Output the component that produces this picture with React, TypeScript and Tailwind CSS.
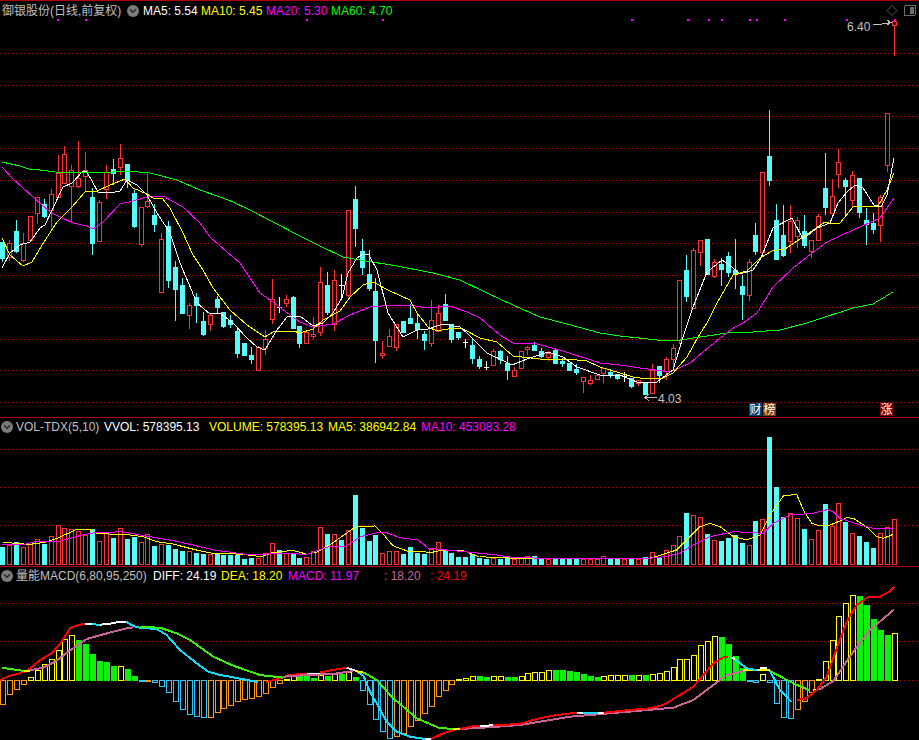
import React from 'react';

// Every series below was read off the picture; v/3 because the numbers come from 3x crops.
type Kind = 'r' | 'c' | 'w';
type Row = [Kind, number, number, number, number];

const STEP = 6.91;
const barX = (i: number) => Math.round(2.3 + STEP * i);

const RED = '#ff3232';
const CYAN = '#54fcfc';
const DOT = '#b80000';

const scale = (oy: number, rows: Row[]) =>
  rows.map(([k, a, b, c, d]) => [k, oy + a / 3, oy + b / 3, oy + c / 3, oy + d / 3] as Row);

const candles: Row[] = [
  ...scale(130, [
    ['c', 336, 384, 336, 396], ['r', 338, 380, 330, 392], ['c', 303, 362, 270, 370], ['r', 340, 390, 310, 395],
    ['r', 259, 330, 259, 330], ['r', 202, 248, 202, 282], ['c', 222, 258, 208, 264], ['r', 193, 240, 178, 293],
    ['r', 130, 200, 75, 200], ['r', 72, 160, 48, 160], ['r', 121, 167, 105, 280], ['r', 145, 167, 33, 173],
    ['r', 120, 137, 67, 185], ['c', 201, 338, 175, 375], ['r', 217, 332, 210, 332], ['r', 125, 176, 105, 207],
    ['c', 117, 129, 87, 165], ['r', 85, 112, 42, 135], ['c', 102, 150, 102, 174], ['c', 189, 288, 180, 293],
    ['r', 232, 341, 232, 351], ['r', 214, 227, 130, 233], ['c', 255, 282, 222, 306], ['r', 328, 485, 310, 485],
    ['c', 288, 450, 273, 473], ['c', 411, 476, 393, 572], ['c', 465, 549, 445, 549], ['r', 526, 556, 520, 596],
    ['c', 501, 525, 490, 578], ['c', 573, 612, 546, 617], ['r', 556, 581, 550, 602], ['c', 507, 531, 498, 550],
    ['c', 546, 588, 546, 594], ['c', 570, 582, 556, 595], ['c', 603, 668, 595, 683], ['c', 639, 675, 639, 678],
    ['c', 675, 687, 652, 702], ['r', 652, 721, 648, 721], ['r', 628, 654, 600, 674], ['r', 508, 566, 447, 581],
    ['w', 532, 532, 501, 548], ['r', 508, 518, 495, 531], ['c', 501, 594, 498, 597], ['c', 588, 639, 588, 654],
  ]),
  ...scale(170, [
    ['r', 487, 518, 487, 518], ['r', 492, 499, 441, 508], ['r', 336, 485, 291, 498], ['c', 345, 427, 306, 435],
    ['r', 331, 462, 300, 483], ['w', 346, 346, 312, 390], ['r', 121, 374, 121, 380], ['c', 87, 174, 48, 230],
    ['c', 243, 291, 207, 315], ['c', 312, 354, 240, 362], ['c', 363, 510, 325, 578], ['r', 550, 556, 513, 567],
    ['r', 499, 528, 477, 532], ['r', 463, 532, 463, 543], ['c', 453, 486, 453, 490], ['c', 444, 459, 402, 462],
    ['c', 459, 478, 430, 508], ['c', 492, 510, 483, 540], ['r', 451, 518, 390, 530], ['r', 430, 484, 405, 484],
    ['c', 402, 450, 372, 452], ['c', 462, 507, 462, 519], ['c', 486, 501, 486, 510], ['w', 516, 516, 506, 534],
    ['c', 525, 564, 507, 582], ['c', 567, 588, 558, 597], ['w', 591, 591, 573, 600], ['r', 544, 585, 537, 588],
    ['c', 543, 568, 540, 582], ['c', 580, 600, 558, 630], ['r', 600, 618, 591, 621], ['r', 544, 593, 544, 593],
    ['r', 531, 537, 528, 555], ['c', 525, 541, 516, 543], ['c', 543, 557, 534, 564], ['r', 549, 561, 543, 573],
    ['c', 540, 579, 534, 582], ['c', 573, 579, 564, 591], ['c', 579, 600, 579, 600], ['c', 597, 606, 582, 615],
    ['r', 621, 632, 621, 669], ['r', 630, 638, 615, 645], ['r', 615, 626, 615, 626],
  ]),
  ...scale(350, [
    ['r', 55, 70, 55, 100], ['c', 66, 72, 57, 84], ['c', 72, 84, 72, 90], ['w', 78, 78, 66, 95],
    ['c', 84, 108, 84, 114], ['r', 90, 99, 90, 108], ['c', 96, 132, 96, 135],
  ]),
  ...scale(200, [
    ['r', 510, 580, 492, 580], ['c', 498, 525, 498, 548], ['r', 477, 513, 471, 540], ['r', 444, 478, 432, 510],
    ['r', 240, 420, 240, 432], ['c', 210, 288, 165, 306], ['r', 150, 324, 144, 324], ['r', 120, 155, 120, 198],
    ['c', 117, 222, 117, 222], ['r', 186, 228, 177, 234], ['c', 192, 207, 174, 258], ['c', 168, 216, 156, 231],
    ['c', 210, 222, 117, 267], ['c', 258, 282, 225, 360], ['r', 186, 285, 177, 303], ['c', 105, 153, 69, 165],
  ]),
  ...scale(140, [
    ['r', 97, 335, 97, 335], ['c', 48, 120, -90, 137], ['c', 240, 357, 192, 360], ['c', 285, 345, 195, 350],
    ['r', 243, 303, 195, 339], ['r', 240, 288, 232, 324], ['c', 273, 315, 225, 324], ['r', 300, 332, 300, 354],
    ['r', 229, 299, 222, 299], ['c', 144, 201, 39, 225], ['r', 168, 219, 117, 219], ['r', 66, 101, 27, 144],
    ['c', 120, 138, 114, 228], ['r', 105, 180, 93, 204], ['c', 114, 216, 114, 234], ['c', 240, 252, 204, 315],
    ['c', 249, 267, 219, 282], ['r', 171, 255, 165, 306], ['r', -81, 75, -81, 96], ['r', -357, -345, -357, -252],
  ]),
];

// Volume bar tops. First stretch from a crop that came out 2.8x wide, y still 3x.
const volTops = [
  396, 390, 381, 396, 388, 373, 386, 363, 330, 340, 343, 348, 360, 342, 378, 352, 369, 340, 372, 366,
  381, 358, 393, 388, 391, 402, 408, 409, 414, 417, 417, 417, 420, 420, 420, 432, 429, 429, 413, 385,
  405, 414, 417, 429, 427, 409, 337, 357, 358, 375, 346, 240, 339, 378, 360, 413, 409, 409, 417, 396,
  414, 417, 402, 382, 406, 414, 426, 426, 417, 429, 432, 429, 431, 424, 433, 428, 424, 424, 429, 433,
  429, 429, 431, 433, 431, 433, 431, 424, 432, 432, 431, 432, 433, 426, 412, 429, 406, 391, 364, 294,
  301, 307, 357, 376, 378, 369, 360, 384, 391, 318, 313, 66, 216, 306, 295, 310, 342, 373, 346, 267,
  333, 265, 321, 355, 363, 381, 399, 355, 337, 313,
].map((v) => 415 + v / 3);

// 'o' orange, 'b' blue, 'y' yellow hollow, 'g' green filled
const macdKinds = [
  'oooo', 'yyyyyyy', 'gggggg', 'y', 'gg', 'b', 'o', 'bbbbbbbb', 'ooooooooooo', 'yy', 'ggg', 'y', 'g', 'y', 'g', 'y', 'g',
  'bbbbb', 'ooooooooo', 'y', 'yy', 'gg', 'yy', 'gg', 'yyyyy', 'ggggggg', 'yyyy', 'g', 'y', 'g', 'yyyyyyyyyy', 'gggg',
  'bb', 'y', 'bbbb', 'ooo', 'yyyyyy', 'ggggg', 'y',
].join('');

const macdEnds = [
  418, 388, 373, 358, 337, 316, 298, 283, 256, 223, 211, 226, 238, 267, 289, 292, 303, 304, 313, 333,
  349, 349, 352, 364, 382, 409, 433, 448, 454, 457, 455, 442, 430, 421, 409, 403, 400, 394, 385, 367,
  355, 342, 334, 333, 333, 340, 331, 333, 328, 328, 322, 336, 376, 418, 463, 499, 518, 514, 505, 484,
  464, 445, 424, 394, 374, 358, 343,
  338, 334, 334, 336, 334, 334, 336, 336, 334, 325, 320, 320, 316, 315, 315, 318, 321, 327, 333, 336,
  334, 331, 331, 331, 330, 331, 330, 328, 325, 319, 307, 283, 283, 271, 241, 229, 214, 216, 237, 273,
  310, 349, 352, 328, 352, 415, 457, 460, 433, 409, 382, 343, 289, 226, 154, 115, 91, 94, 120, 163,
  196, 210, 205,
].map((v) => 565 + v / 3);

const macdColor: Record<string, string> = { o: '#ff9a14', b: '#32c8ff', y: '#ffff00', g: '#0cf00c' };

const pts = (list: number[][], ox = 0, oy = 0, sx = 1 / 3, sy = 1 / 3) =>
  list.map(([x, y]) => `${(ox + x * sx).toFixed(1)},${(oy + y * sy).toFixed(1)}`).join(' ');

const ma60 = [[2,162],[20,166],[29,169],[40,170],[55,172],[100,173],[127,171],[150,173],[177,180],[200,190],[220,197],[233,202],[248,209],[300,236],[320,246],[343,257],[360,260],[397,266],[433,273],[460,280],[487,293],[513,305],[540,317],[567,324],[600,333],[620,336],[657,340],[680,340],[727,333],[753,332],[780,330],[807,323],[853,308],[873,304],[893,292]];
const ma20 = [[2,167],[13,179],[33,197],[50,212],[62,218],[73,223],[87,226],[93,229],[103,222],[120,204],[133,201],[147,197],[163,196],[183,207],[200,223],[210,237],[227,252],[240,263],[260,293],[277,305],[290,315],[300,322],[313,327],[333,324],[350,315],[370,307],[393,305],[410,305],[427,308],[450,306],[467,312],[480,318],[500,335],[513,343],[533,343],[560,350],[600,363],[620,365],[640,368],[670,372],[690,363],[703,352],[720,338],[735,327],[743,323],[757,313],[773,287],[793,268],[807,257],[827,242],[853,230],[880,218],[894,198]];
const ma10 = [[2,238],[10,255],[23,266],[32,262],[42,245],[57,222],[72,207],[85,192],[97,191],[110,185],[125,179],[133,188],[147,194],[153,198],[162,198],[170,208],[183,233],[193,255],[203,270],[213,288],[230,310],[247,325],[265,337],[273,332],[293,331],[300,333],[313,329],[323,320],[340,311],[350,297],[363,285],[373,282],[390,291],[410,300],[417,313],[428,327],[437,331],[453,328],[463,329],[480,338],[497,342],[513,356],[540,359],[560,359],[577,360],[587,361],[600,367],[620,373],[633,377],[647,379],[663,378],[673,373],[687,357],[698,337],[707,323],[717,303],[733,275],[747,271],[760,258],[772,251],[785,249],[803,237],[825,222],[832,224],[840,223],[853,207],[878,206],[887,190],[894,173]];
const ma5 = [[2,268],[10,253],[20,245],[30,242],[40,228],[45,225],[53,208],[63,187],[72,183],[83,171],[87,172],[98,192],[110,193],[120,191],[127,180],[137,185],[147,195],[157,213],[170,233],[180,263],[197,303],[210,314],[220,313],[233,323],[247,338],[257,347],[265,350],[277,330],[287,317],[300,316],[313,326],[323,323],[333,313],[342,298],[348,273],[357,258],[363,254],[369,255],[377,270],[388,313],[403,337],[417,330],[428,329],[443,324],[460,327],[467,333],[487,353],[512,365],[527,359],[548,352],[563,357],[577,367],[600,375],[620,375],[637,382],[657,382],[673,370],[683,337],[693,307],[707,272],[722,260],[732,267],[740,274],[753,270],[761,258],[773,228],[792,218],[803,239],[817,228],[830,223],[838,203],[847,192],[855,185],[863,188],[874,205],[881,207],[887,195],[894,158]];

const markers = [57, 85, 306, 382, 631, 687, 708, 721, 749, 756, 784, 846, 894];

const volYellowA = [[7,381],[50,386],[85,388],[125,382],[160,370],[215,343],[250,343],[270,355],[320,358],[350,358],[400,365],[440,380],[480,386],[550,405],[590,414],[680,418],[730,425],[760,414],[820,406],[860,418],[890,410],[930,385],[990,340],[1010,334],[1050,333],[1075,360],[1100,392],[1140,408],[1210,412],[1240,405],[1300,408],[1340,425]];
const volYellowB = [[0,425],[100,430],[300,432],[500,431],[530,424],[590,405],[620,375],[660,335],[690,325],[720,335],[760,365],[800,375],[840,360],[870,300],[910,243],[950,238],[970,285],[995,325],[1020,333],[1050,330],[1075,320],[1100,308],[1120,310],[1165,340],[1190,365],[1210,370],[1240,358]];
const volMagentaA = [[7,388],[60,390],[100,380],[170,378],[230,360],[260,354],[340,350],[420,365],[500,380],[600,405],[700,420],[780,415],[860,418],[920,395],[970,393],[1010,365],[1060,352],[1080,352],[1120,368],[1170,375],[1200,400],[1300,410],[1344,415]];
const volMagentaB = [[0,415],[50,420],[100,428],[300,431],[500,431],[560,424],[600,415],[640,390],[690,365],[760,350],[800,352],[850,355],[880,325],[930,300],[1000,295],[1040,284],[1060,290],[1080,310],[1140,330],[1180,340],[1240,342]];

const PINK = '#c86496';
const DGREEN = '#3cf00a';
const LCYAN = '#14dcff';
const YEL = '#ffff00';

// [colour, points] coloured stretches of the two thick lines, left crop then right crop
const diffA: [string, number[][]][] = [
  ['#ff0000', [[0,345],[30,332],[60,325],[85,315],[120,285],[155,265],[185,230],[210,190],[225,183],[255,176]]],
  ['#ffffff', [[255,176],[275,178]]],
  [LCYAN, [[275,178],[300,179]]],
  ['#ffffff', [[300,179],[330,176],[360,170],[378,170]]],
  [LCYAN, [[378,170],[400,183],[420,188],[470,192],[500,210],[540,255],[590,295],[625,320],[660,330],[700,337],[730,343],[775,351]]],
  ['#ff0000', [[797,351],[830,343],[870,330],[920,326]]],
  ['#ffffff', [[920,326],[960,326]]],
  ['#ff0000', [[960,322],[1040,308]]],
  ['#ffffff', [[1040,308],[1070,318]]],
  [LCYAN, [[1070,318],[1090,332],[1110,380],[1130,415],[1160,470],[1190,500],[1230,515],[1275,522]]],
  ['#ffffff', [[1275,522],[1293,522]]],
  ['#ff0000', [[1293,522],[1330,505],[1380,490]]],
];
const deaA: [string, number[][]][] = [
  [DGREEN, [[6,308],[72,318]]],
  [YEL, [[72,318],[90,318]]],
  [PINK, [[90,316],[130,308],[165,290],[205,260],[260,222],[310,208],[380,190],[400,187]]],
  [DGREEN, [[420,186],[480,188],[530,205],[570,225],[640,275],[700,302],[780,330],[850,338]]],
  [PINK, [[850,335],[920,330],[1000,327],[1060,318]]],
  [YEL, [[1065,318],[1090,322]]],
  [DGREEN, [[1090,322],[1130,345],[1180,400],[1250,460],[1320,490],[1360,491]]],
  [YEL, [[1360,491],[1380,491]]],
];
const diffB: [string, number[][]][] = [
  ['#ff0000', [[0,492],[40,484],[60,483]]],
  ['#ffffff', [[60,483],[100,481]]],
  ['#ff0000', [[100,481],[180,477],[230,462],[290,450],[350,443]]],
  ['#ffffff', [[350,443],[370,443]]],
  [LCYAN, [[370,443],[413,443]]],
  ['#ffffff', [[413,443],[432,443]]],
  ['#ff0000', [[432,443],[500,436],[570,430],[610,420],[660,390],[700,365],[760,295],[790,277],[805,275]]],
  ['#ffffff', [[812,278],[825,281]]],
  [LCYAN, [[825,283],[860,310],[890,316]]],
  [LCYAN, [[930,318],[960,375],[995,412]]],
  ['#ff0000', [[1012,405],[1040,400],[1070,375],[1100,335],[1130,250],[1160,170],[1190,120],[1225,96],[1260,95],[1285,82],[1303,65]]],
];
const deaB: [string, number[][]][] = [
  [PINK, [[0,492],[100,486],[180,480],[330,455],[530,438],[640,428],[700,405],[760,360],[800,330],[850,318]]],
  [YEL, [[848,315],[930,315]]],
  ['#ffffff', [[900,310],[920,310]]],
  [DGREEN, [[930,318],[1000,355],[1050,376]]],
  [YEL, [[1060,375],[1075,375]]],
  [PINK, [[1075,375],[1120,348],[1180,260],[1230,195],[1303,133]]],
];

const DottedLine = ({ y, x2 = 919 }: { y: number; x2?: number }) => (
  <line x1={0} x2={x2} y1={y + 0.5} y2={y + 0.5} stroke={DOT} strokeDasharray="1 3" />
);

const Candle = ({ row, i }: { row: Row; i: number }) => {
  const x = barX(i);
  const [kind, a, b, c, d] = row;
  const top = Math.round(a);
  const bot = Math.round(b);
  const hi = Math.round(c);
  const lo = Math.round(d);
  const colour = kind === 'r' ? RED : kind === 'c' ? CYAN : '#ffffff';
  if (kind === 'w') {
    return (
      <g stroke={colour}>
        <line x1={x + 0.5} x2={x + 0.5} y1={hi} y2={lo} />
        <line x1={x - 2} x2={x + 3} y1={top + 0.5} y2={top + 0.5} />
      </g>
    );
  }
  return (
    <g stroke={colour}>
      <line x1={x + 0.5} x2={x + 0.5} y1={hi} y2={top} />
      <line x1={x + 0.5} x2={x + 0.5} y1={bot} y2={lo} />
      <rect x={x - 1.5} y={top + 0.5} width={4} height={Math.max(bot - top, 1)} fill={kind === 'c' ? colour : '#000000'} />
    </g>
  );
};

const Chevron = () => (
  <span className="flex h-[12px] w-[12px] shrink-0 items-center justify-center rounded-full bg-[#7c7c7c]">
    <svg width="8" height="6" viewBox="0 0 8 6" fill="none" stroke="#262626" strokeWidth="1.4">
      <path d="M1 1.2 L4 4.2 L7 1.2" />
    </svg>
  </span>
);

const textFont = "font-['Liberation_Sans','Noto_Sans_CJK_SC',sans-serif] text-[12px] leading-[14px] whitespace-nowrap";

export default function App() {
  return (
    <div className={`flex h-[740px] w-[919px] flex-col overflow-hidden bg-black ${textFont}`}>
      {/* Price pane */}
      <div className="relative border-t border-[#b00000]">
        <svg className="block" width={919} height={416} viewBox="0 1 919 416" shapeRendering="crispEdges" fill="none">
          {[53, 85, 116, 148, 180, 212, 243, 275, 307, 339, 370, 402].map((y) => (
            <DottedLine key={y} y={y} />
          ))}
          {candles.map((row, i) => (
            <Candle key={i} row={row} i={i} />
          ))}
          <polyline points={pts(ma60, 0, 0, 1, 1)} stroke="#00ff00" />
          <polyline points={pts(ma20, 0, 0, 1, 1)} stroke="#ff00ff" />
          <polyline points={pts(ma10, 0, 0, 1, 1)} stroke="#ffff00" />
          <polyline points={pts(ma5, 0, 0, 1, 1)} stroke="#ffffff" />
          {markers.map((x) => (
            <rect key={x} x={x} y={19} width={2} height={2} fill="#ff00ff" />
          ))}
          <path d="M873.5 25 L882 24 L891 22.5 M887 20 L891 22.5 L887 25" stroke="#c0c0c0" />
          <path d="M645 397.5 H657 M649 394 L645 397.5 L649 401" stroke="#c0c0c0" />
          <path d="M892 5.5 L897 10.5 L892 15.5 L887 10.5 Z" stroke="#5c5c5c" shapeRendering="auto" />
          <rect x={904.5} y={5.5} width={11} height={10} rx={1.5} stroke="#6e6e6e" strokeWidth={1} />
          <rect x={910} y={7} width={4} height={7} fill="#6e6e6e" />
        </svg>

        <div className="absolute left-[2px] top-[3px] flex items-center">
          <span className="w-[125px] text-[#c0c0c0]">御银股份(日线,前复权)</span>
          <Chevron />
          <span className="ml-[4px] w-[58px] text-[#ffffff]">MA5: 5.54</span>
          <span className="w-[65px] text-[#ffff00]">MA10: 5.45</span>
          <span className="w-[65px] text-[#ff00ff]">MA20: 5.30</span>
          <span className="text-[#00ff00]">MA60: 4.70</span>
        </div>

        <span className="absolute left-[847px] top-[19px] text-[#c0c0c0]">6.40</span>
        <span className="absolute left-[658px] top-[391px] text-[#c0c0c0]">4.03</span>
        <span className="absolute left-[749px] top-[402px] flex h-[13px] w-[13px] items-center justify-center bg-[#0a3a6e] text-white">财</span>
        <span className="absolute left-[763px] top-[402px] flex h-[13px] w-[13px] items-center justify-center bg-[#7a3c0a] text-white">榜</span>
        <span className="absolute left-[880px] top-[402px] flex h-[13px] w-[13px] items-center justify-center bg-[#800000] text-white">涨</span>
      </div>

      {/* Volume pane */}
      <div className="relative border-t border-[#b00000]">
        <svg className="block" width={919} height={148} viewBox="0 418 919 148" shapeRendering="crispEdges" fill="none">
          {[449, 487, 525].map((y) => (
            <DottedLine key={y} y={y} />
          ))}
          {volTops.map((t, i) => {
            const x = barX(i);
            const top = Math.round(t);
            const hollow = candles[i][0] === 'r' || i === 90;
            return hollow ? (
              <rect key={i} x={x - 1.5} y={top + 0.5} width={4} height={564 - top} stroke={RED} />
            ) : (
              <rect key={i} x={x - 2} y={top} width={5} height={565 - top} fill={CYAN} />
            );
          })}
          <polyline points={pts(volYellowA, 0, 415, 1 / 2.8)} stroke="#ffff00" />
          <polyline points={pts(volYellowB, 480, 415)} stroke="#ffff00" />
          <polyline points={pts(volMagentaA, 0, 415, 1 / 2.8)} stroke="#ff00ff" />
          <polyline points={pts(volMagentaB, 480, 415)} stroke="#ff00ff" />
        </svg>
        <div className="absolute left-[1px] top-[2px] flex items-center">
          <Chevron />
          <span className="ml-[3px] w-[88px] text-[#c0c0c0]">VOL-TDX(5,10)</span>
          <span className="w-[105px] text-[#ffffff]">VVOL: 578395.13</span>
          <span className="w-[119px] text-[#ffff00]">VOLUME: 578395.13</span>
          <span className="w-[93px] text-[#ffff00]">MA5: 386942.84</span>
          <span className="text-[#ff00ff]">MA10: 453083.28</span>
        </div>
      </div>

      {/* MACD pane */}
      <div className="relative border-t border-[#b00000]">
        <svg className="block" width={919} height={173} viewBox="0 567 919 173" shapeRendering="crispEdges" fill="none">
          {[603, 641, 680].map((y) => (
            <DottedLine key={y} y={y} />
          ))}
          {macdEnds.map((e, i) => {
            const x = barX(i);
            const end = Math.round(e);
            const kind = macdKinds[i] ?? 'y';
            const colour = macdColor[kind];
            const top = Math.min(end, 680);
            const h = Math.abs(end - 680);
            return kind === 'g' ? (
              <rect key={i} x={x - 2} y={top} width={6} height={h + 1} fill={colour} />
            ) : (
              <rect key={i} x={x - 2 + 0.5} y={top + 0.5} width={5} height={Math.max(h, 1)} stroke={colour} />
            );
          })}
          <g strokeWidth={2} strokeLinejoin="round">
            {diffA.map(([c, p], i) => (
              <polyline key={`da${i}`} points={pts(p, 0, 565)} stroke={c} />
            ))}
            {deaA.map(([c, p], i) => (
              <polyline key={`ea${i}`} points={pts(p, 0, 565)} stroke={c} />
            ))}
            {deaB.map(([c, p], i) => (
              <polyline key={`eb${i}`} points={pts(p, 460, 565)} stroke={c} />
            ))}
            {diffB.map(([c, p], i) => (
              <polyline key={`db${i}`} points={pts(p, 460, 565)} stroke={c} />
            ))}
          </g>
        </svg>
        <div className="absolute left-[1px] top-[2px] flex items-center">
          <Chevron />
          <span className="ml-[3px] w-[137px] text-[#c0c0c0]">量能MACD(6,80,95,250)</span>
          <span className="w-[68px] text-[#ffffff]">DIFF: 24.19</span>
          <span className="w-[67px] text-[#ffff00]">DEA: 18.20</span>
          <span className="w-[96px] text-[#ff00ff]">MACD: 11.97</span>
          <span className="w-[46px] text-[#c86496]">: 18.20</span>
          <span className="text-[#ff0000]">: 24.19</span>
        </div>
      </div>
    </div>
  );
}
